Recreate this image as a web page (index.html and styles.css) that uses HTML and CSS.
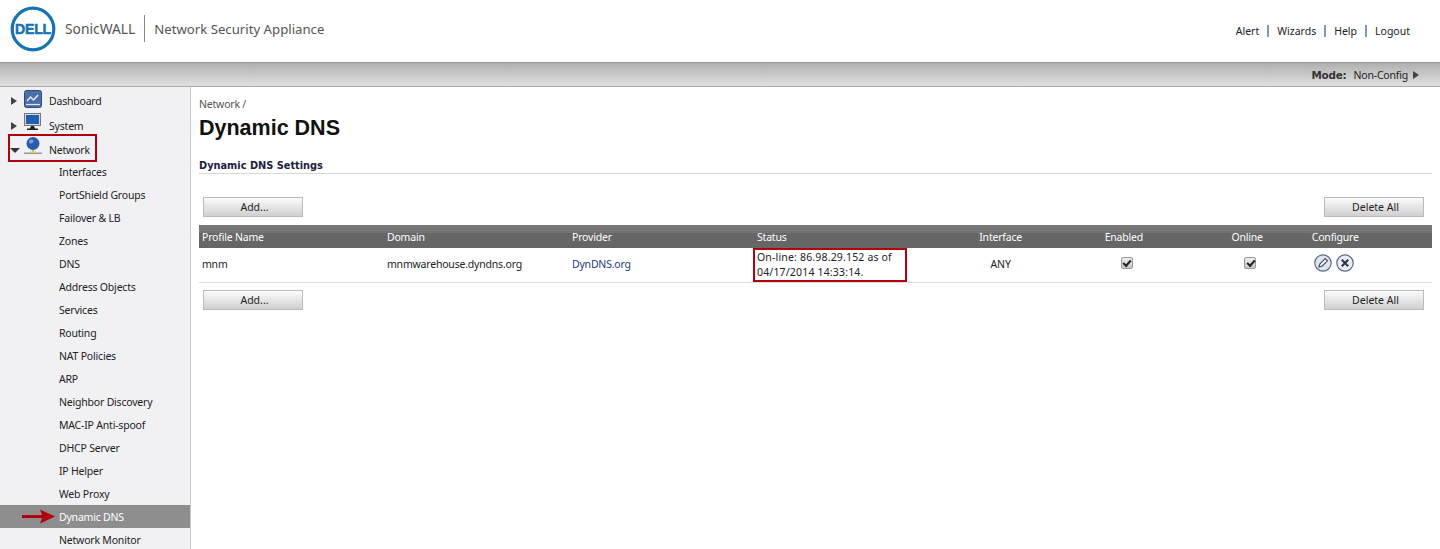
FILE: index.html
```html
<!DOCTYPE html>
<html lang="en">
<head>
    <meta charset="UTF-8">
    <meta name="viewport" content="width=device-width, initial-scale=1.0">
    <title>Dynamic DNS</title>
    <link rel="stylesheet" href="styles.css">
</head>
<body>

    <header class="top">
        <div class="brand">
            <svg class="logo" width="46" height="46" viewBox="0 0 46 46">
                <circle cx="23" cy="23" r="20.8" fill="none" stroke="#1573b4" stroke-width="3.2"/>
                <text x="23" y="28" text-anchor="middle" class="logo-text" textLength="36" lengthAdjust="spacingAndGlyphs">DELL</text>
            </svg>
            <span class="sonic">SonicWALL</span>
            <span class="product">Network Security Appliance</span>
        </div>
        <nav class="top-links">
            <a>Alert</a><i></i><a>Wizards</a><i></i><a>Help</a><i></i><a>Logout</a>
        </nav>
    </header>

    <div class="band">
        <b>Mode:</b>
        <span>Non-Config</span>
        <span class="tri-right"></span>
    </div>

    <div class="main">
        <aside class="side">
            <div class="group dash">
                <span class="tri-right dark"></span>
                <svg class="gicon" width="18" height="18" viewBox="0 0 18 18">
                    <rect x="0.5" y="0.5" width="17" height="17" rx="2" fill="#4a6fa8" stroke="#2f4a7c"/>
                    <path d="M3 11l3.500-4 3 3 4.500-5" fill="none" stroke="#e8eef8" stroke-width="1.400"/>
                    <path d="M2 14.500h14" stroke="#dfe6f2" stroke-width="1.200"/>
                </svg>
                <span class="label">Dashboard</span>
            </div>
            <div class="group">
                <span class="tri-right dark"></span>
                <svg class="gicon" width="18" height="18" viewBox="0 0 18 18">
                    <rect x="0.500" y="0.500" width="16" height="12" fill="#d8d8d8" stroke="#777"/>
                    <rect x="2" y="2" width="13" height="9" fill="#1f5fb0"/>
                    <path d="M7 13h3l1 2.500h3v1.500H3v-1.500h3z" fill="#222"/>
                </svg>
                <span class="label">System</span>
            </div>
            <div class="group">
                <span class="tri-down"></span>
                <svg class="gicon" width="18" height="18" viewBox="0 0 18 18">
                    <circle cx="9" cy="6.500" r="6.500" fill="#2a5cae"/>
                    <path d="M5 3.500c2-1.500 4-1 4.500.5s-2 3-4 2.500z" fill="#7f9fd6"/>
                    <path d="M8 13h2v2.500H8z" fill="#d9b84a"/>
                    <path d="M0 15.500h18v1.500H0z" fill="#9a9a9a"/>
                    <path d="M6 14.500h6v1.500H6z" fill="#e2c65c"/>
                </svg>
                <span class="label">Network</span>
                <span class="mark mark-net"></span>
            </div>
            <ul class="sub">
                <li>Interfaces</li>
                <li>PortShield Groups</li>
                <li>Failover &amp; LB</li>
                <li>Zones</li>
                <li>DNS</li>
                <li>Address Objects</li>
                <li>Services</li>
                <li>Routing</li>
                <li>NAT Policies</li>
                <li>ARP</li>
                <li>Neighbor Discovery</li>
                <li>MAC-IP Anti-spoof</li>
                <li>DHCP Server</li>
                <li>IP Helper</li>
                <li>Web Proxy</li>
                <li class="active">
                    <svg class="arrow" width="34" height="15" viewBox="0 0 34 15">
                        <path d="M1 6h20L19 0.500 34 7.500 19 14.500 21 9H1z" fill="#b0000e"/>
                    </svg>
                    Dynamic DNS
                </li>
                <li>Network Monitor</li>
            </ul>
        </aside>

        <section class="content">
            <div class="crumb">Network /</div>
            <h1>Dynamic DNS</h1>
            <h2>Dynamic DNS Settings</h2>

            <div class="actions first">
                <button>Add...</button>
                <button>Delete All</button>
            </div>

            <table>
                <thead>
                    <tr>
                        <th class="w15">Profile Name</th>
                        <th class="w15">Domain</th>
                        <th class="w15">Provider</th>
                        <th class="w15">Status</th>
                        <th class="mid">Interface</th>
                        <th class="mid">Enabled</th>
                        <th class="mid">Online</th>
                        <th>Configure</th>
                    </tr>
                </thead>
                <tbody>
                    <tr>
                        <td>mnm</td>
                        <td>mnmwarehouse.dyndns.org</td>
                        <td class="link">DynDNS.org</td>
                        <td class="status">On-line: 86.98.29.152 as of<br>04/17/2014 14:33:14.<span class="mark mark-status"></span></td>
                        <td class="mid">ANY</td>
                        <td class="mid"><span class="check"></span></td>
                        <td class="mid"><span class="check"></span></td>
                        <td class="tools">
                            <svg width="18" height="18" viewBox="0 0 18 18">
                                <circle cx="9" cy="9" r="8.200" fill="#dfe5ef" stroke="#5d6b85" stroke-width="1.200"/>
                                <path d="M5 13l.8-3 5.400-5.400 2.200 2.200L8 12.200z" fill="#fff" stroke="#46506a" stroke-width="1.200"/>
                            </svg>
                            <svg width="18" height="18" viewBox="0 0 18 18">
                                <circle cx="9" cy="9" r="8.200" fill="#e9edf4" stroke="#5d6b85" stroke-width="1.200"/>
                                <path d="M5.800 5.800l6.400 6.400M12.200 5.800l-6.400 6.400" stroke="#2c3346" stroke-width="2"/>
                            </svg>
                        </td>
                    </tr>
                </tbody>
            </table>

            <div class="actions last">
                <button>Add...</button>
                <button>Delete All</button>
            </div>
        </section>
    </div>

</body>
</html>
```

FILE: styles.css
```css
body{
    margin: 0;
    padding: 0;
    height: 549px;
    overflow: hidden;
    background: white;
    color: #222;
    font-family: "Noto Sans", sans-serif;
    font-size: 10.5px;
    letter-spacing: -.2px;
}

.top{
    height: 62px;
    display: flex;
    justify-content: space-between;
    align-items: center;
}

.brand{
    display: flex;
    align-items: center;
    padding: 0 0 5px 10px;
}

.logo-text{
    font-family: "Liberation Sans", sans-serif;
    font-weight: bold;
    font-size: 14px;
    fill: #1573b4;
    stroke: #1573b4;
    stroke-width: .5px;
}

.sonic{
    font-size: 13.8px;
    letter-spacing: 0;
    color: #555;
    margin-left: 9px;
    padding-right: 9px;
    line-height: 27px;
    border-right: 1px solid #888;
}

.product{
    font-size: 13.2px;
    letter-spacing: 0;
    color: #555;
    margin-left: 9px;
}

.top-links{
    display: flex;
    align-items: center;
    padding-right: 30px;
    letter-spacing: 0;
}

.top-links i{
    width: 2px;
    height: 12px;
    margin: 0 8px;
    background: #7f9ab5;
}

.band{
    height: 25px;
    box-sizing: border-box;
    border-top: 1px solid #999;
    border-bottom: 1px solid #aaa;
    background: linear-gradient(#b0b0b0, #e0e0e0);
    display: flex;
    justify-content: flex-end;
    align-items: center;
    gap: 7px;
    padding-right: 21px;
}

.band b{
    font-family: "DejaVu Sans", sans-serif;
    font-size: 10.4px;
    color: #333;
}

.tri-right{
    width: 0;
    height: 0;
    border-left: 6px solid #444;
    border-top: 4.5px solid transparent;
    border-bottom: 4.5px solid transparent;
    margin-left: -2px;
}

.tri-right.dark{
    margin: 0 7px 0 0;
}

.tri-down{
    width: 0;
    height: 0;
    border-top: 5px solid #333;
    border-left: 5px solid transparent;
    border-right: 5px solid transparent;
    margin: 0 4px 0 -1px;
}

.main{
    display: flex;
    height: 462px;
}

.side{
    width: 190px;
    flex: none;
    background: #f1f1f4;
    border-right: 1px solid #c8c8c8;
}

.group{
    position: relative;
    height: 24px;
    display: flex;
    align-items: center;
    padding-left: 11px;
}

.group.dash{
    height: 25px;
    margin: 1px 0;
}

.gicon{
    margin-bottom: 8px;
}

.dash .gicon{
    margin-bottom: 4px;
}

.label{
    margin-left: 7px;
}

.sub{
    list-style: none;
    margin: -2px 0 0;
    padding: 0;
}

.sub li{
    position: relative;
    height: 23px;
    line-height: 25px;
    padding-left: 59px;
}

.sub li.active{
    background: #8e8e8e;
    color: white;
}

.arrow{
    position: absolute;
    left: 21px;
    top: 4px;
}

.mark{
    position: absolute;
    border: 2px solid #b3000f;
    box-sizing: border-box;
}

.mark-net{
    left: 8px;
    top: -4px;
    width: 89px;
    height: 28px;
}

.content{
    flex: 1;
    padding: 8px 8px 0 8px;
    min-width: 0;
}

.crumb{
    color: #555;
    height: 18px;
    line-height: 18px;
}

h1{
    margin: 2px 0 0;
    font-family: "Liberation Sans", sans-serif;
    font-size: 21.5px;
    letter-spacing: 0;
    line-height: 26px;
    height: 32px;
    color: #111;
}

h2{
    margin: 11px 0 0;
    font-family: "DejaVu Sans", sans-serif;
    font-size: 9.8px;
    letter-spacing: 0;
    line-height: 16px;
    height: 15px;
    color: #1a2240;
    border-bottom: 1px solid #d8d8d8;
}

.actions{
    display: flex;
    justify-content: space-between;
    padding: 0 8px 0 4px;
    margin-top: 8px;
}

.actions.first{
    margin-top: 23px;
}

.actions.last{
    margin-top: 7px;
}

button{
    width: 100px;
    height: 20px;
    padding: 0 0 0 3px;
    font: inherit;
    letter-spacing: 0;
    color: #222;
    border: 1px solid #bbb;
    background: linear-gradient(#fbfbfb, #d0d0d0);
}

table{
    width: 100%;
    table-layout: fixed;
    border-collapse: collapse;
    margin-top: 8px;
}

th{
    height: 23px;
    padding: 1px 3px 0;
    box-sizing: border-box;
    text-align: left;
    font-weight: normal;
    color: white;
    background: linear-gradient(#757575 0, #757575 35%, #666 35%);
}

.w15{
    width: 185px;
}

td{
    height: 34px;
    padding: 0 3px 1px;
    box-sizing: border-box;
    border-bottom: 1px solid #ddd;
    line-height: 15px;
}

th.mid, td.mid{
    text-align: center;
}

.link{
    color: #1b3a7a;
}

.status{
    position: relative;
    padding: 1px 3px 0;
    letter-spacing: .17px;
}

.mark-status{
    left: -1px;
    top: 0;
    width: 154px;
    height: 34px;
}

.check{
    display: inline-block;
    width: 12px;
    height: 12px;
    box-sizing: border-box;
    position: relative;
    left: 3px;
    top: 1px;
    background: linear-gradient(#eee, #c8c8c8);
    border: 1px solid #999;
    border-radius: 2px;
}

.check::after{
    content: "";
    display: block;
    width: 6px;
    height: 3px;
    margin: 1.500px 0 0 1.500px;
    border-left: 2px solid #222;
    border-bottom: 2px solid #222;
    transform: rotate(-48deg);
}

.tools svg{
    display: inline-block;
    vertical-align: middle;
    margin: -2px 0 0 2px;
}
```
